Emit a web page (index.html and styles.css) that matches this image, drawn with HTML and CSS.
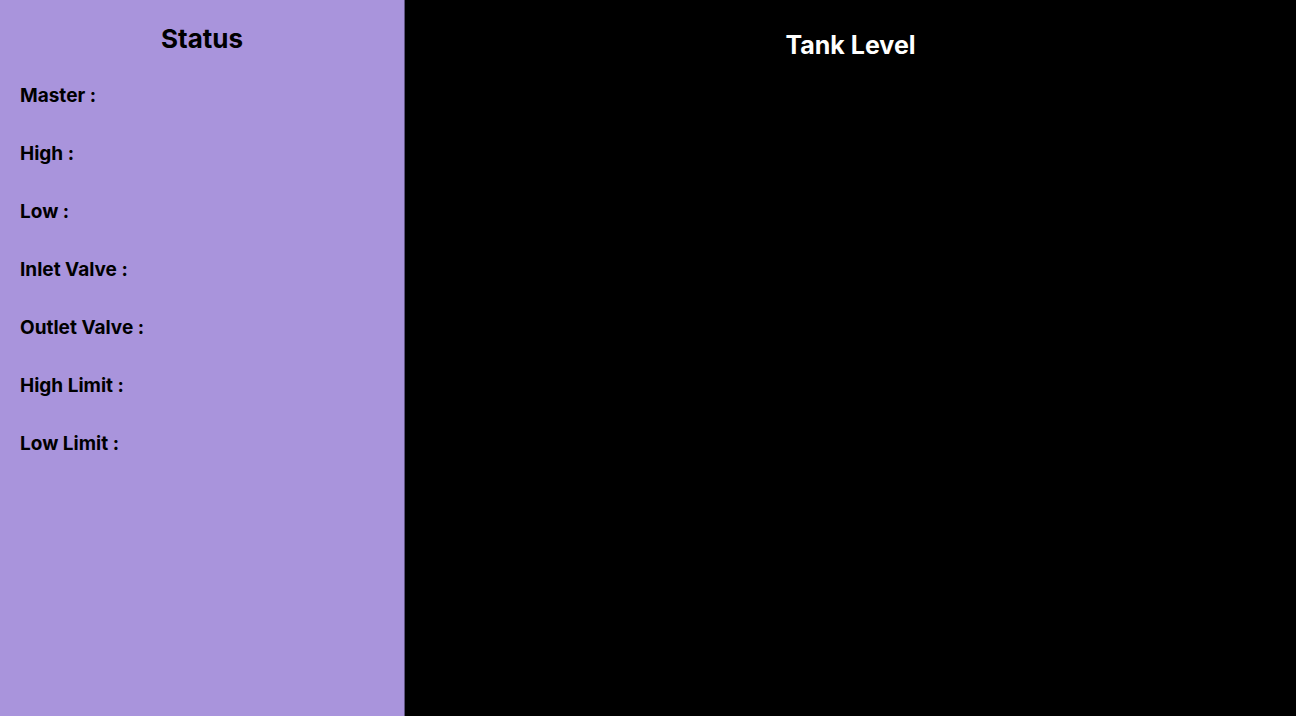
FILE: index.html
```html
<!DOCTYPE html>
<html lang="en">
<head>
    <meta charset="UTF-8">
    <meta name="viewport" content="width=device-width, initial-scale=1.0">
    <title>Tank Monitor</title>
<link rel="stylesheet" href="styles.css">
</head>
<body>
    <div class="layout">
        <div class="status-panel">
            <h2>Status</h2>
            <div class="status-list">
                <div class="status-item">Master :</div>
                <div class="status-item">High :</div>
                <div class="status-item">Low :</div>
                <div class="status-item">Inlet Valve :</div>
                <div class="status-item">Outlet Valve :</div>
                <div class="status-item">High Limit :</div>
                <div class="status-item">Low Limit :</div>
            </div>
        </div>
        <div class="tank-panel">
            <h2>Tank Level</h2>
        </div>
    </div>
</body>
</html>
```
FILE: styles.css
```css
body {
    font-family: Inter, "Liberation Sans", Arial, sans-serif;
    margin: 0;
    padding: 0;
    background-color: #000000;
}

.layout {
    display: flex;
    height: 100vh;
}

.status-panel {
    width: 405px;
    flex-shrink: 0;
    box-sizing: border-box;
    background-color: #a994dc;
    border-right: 1px solid #5e5480;
    padding: 23px 20px;
    color: #000000;
}

.status-panel h2 {
    font-size: 26px;
    font-weight: 700;
    line-height: 32px;
    text-align: center;
    margin: 0 0 30px 0;
}

.status-list {
    display: flex;
    flex-direction: column;
    gap: 36px;
}

.status-item {
    font-size: 19px;
    font-weight: 700;
    line-height: 22px;
}

.tank-panel {
    flex: 1;
    color: #ffffff;
    padding-top: 29px;
}

.tank-panel h2 {
    font-size: 25px;
    font-weight: 700;
    line-height: 32px;
    text-align: center;
    margin: 0;
}
```
